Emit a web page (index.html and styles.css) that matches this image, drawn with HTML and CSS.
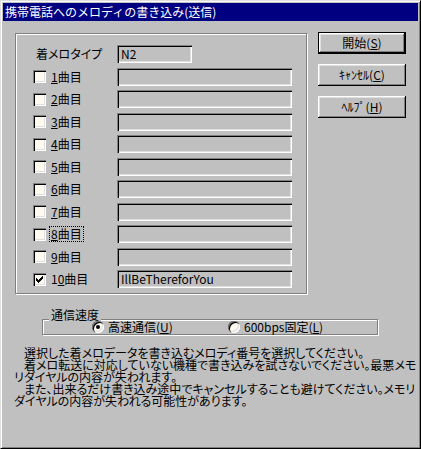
FILE: index.html
```html
<!DOCTYPE html>
<html lang="ja">
<head>
<meta charset="utf-8">
<title>携帯電話へのメロディの書き込み(送信)</title>
<link rel="stylesheet" href="styles.css">
</head>
<body>
<div class="window">
  <div class="titlebar">携帯電話へのメロディの書き込み(送信)</div>
  <div class="client">
    <div class="top">
      <div class="group">
        <span class="type-label">着メロタイプ</span>
        <span class="field short">N2</span>

        <span class="check"><span class="box"></span><span class="lbl"><u>1</u>曲目</span></span>
        <span class="field"></span>

        <span class="check"><span class="box"></span><span class="lbl"><u>2</u>曲目</span></span>
        <span class="field"></span>

        <span class="check"><span class="box"></span><span class="lbl"><u>3</u>曲目</span></span>
        <span class="field"></span>

        <span class="check"><span class="box"></span><span class="lbl"><u>4</u>曲目</span></span>
        <span class="field"></span>

        <span class="check"><span class="box"></span><span class="lbl"><u>5</u>曲目</span></span>
        <span class="field"></span>

        <span class="check"><span class="box"></span><span class="lbl"><u>6</u>曲目</span></span>
        <span class="field"></span>

        <span class="check"><span class="box"></span><span class="lbl"><u>7</u>曲目</span></span>
        <span class="field"></span>

        <span class="check"><span class="box"></span><span class="lbl focus"><u>8</u>曲目</span></span>
        <span class="field"></span>

        <span class="check"><span class="box"></span><span class="lbl"><u>9</u>曲目</span></span>
        <span class="field"></span>

        <span class="check"><span class="box"><svg class="tick" viewBox="0 0 13 13" width="13" height="13"><path d="M3 5h1v3h-1zM4 6h1v3h-1zM5 7h1v3h-1zM6 6h1v3h-1zM7 5h1v3h-1zM8 4h1v3h-1zM9 3h1v3h-1z" fill="#000"/></svg></span><span class="lbl">1<u>0</u>曲目</span></span>
        <span class="field">IllBeThereforYou</span>
      </div>
      <div class="buttons">
        <div class="btn default"><span>開始(<u>S</u>)</span></div>
        <div class="btn"><span>ｷｬﾝｾﾙ(<u>C</u>)</span></div>
        <div class="btn"><span>ﾍﾙﾌﾟ(<u>H</u>)</span></div>
      </div>
    </div>
    <div class="speed">
      <span class="legend">通信速度</span>
      <span class="radio-item first"><span class="radio on"></span><span class="rtext">高速通信(<u>U</u>)</span></span>
      <span class="radio-item"><span class="radio"></span><span class="rtext">600bps固定(<u>L</u>)</span></span>
    </div>
    <div class="note">
      <div class="line indent">選択した着メロデータを書き込むメロディ番号を選択してください。</div>
      <div class="line indent">着メロ転送に対応していない機種で書き込みを試さないでください。最悪メモ</div>
      <div class="line">リダイヤルの内容が失われます。</div>
      <div class="line indent">また、出来るだけ書き込み途中でキャンセルすることも避けてください。メモリ</div>
      <div class="line">ダイヤルの内容が失われる可能性があります。</div>
    </div>
  </div>
</div>
</body>
</html>
```
FILE: styles.css
```css
html, body {
  margin: 0;
  padding: 0;
  background: #c0c0c0;
}

body {
  font-family: "Noto Sans CJK JP", sans-serif;
  font-size: 12px;
  line-height: 12px;
  color: #000;
}

.window {
  width: 421px;
  height: 449px;
  box-sizing: border-box;
  border: 1px solid;
  border-color: #dfdfdf #000 #000 #dfdfdf;
  box-shadow: inset 1px 1px #fff, inset -1px -1px #808080;
  padding: 2px;
  background: #c0c0c0;
}

.titlebar {
  height: 18px;
  line-height: 18px;
  background: #000080;
  color: #fff;
  padding-left: 2px;
  white-space: nowrap;
}

.top {
  display: flex;
  align-items: flex-start;
}

.group {
  margin: 12px 0 0 12px;
  width: 292px;
  height: 261px;
  box-sizing: border-box;
  border: 1px solid #808080;
  box-shadow: inset 1px 1px #fff, 1px 1px #fff;
  padding: 11px 0 0 17px;
  display: grid;
  grid-template-columns: 84px 175px;
  grid-auto-rows: 18px;
  row-gap: 4.5px;
  align-items: center;
}

.type-label {
  padding-left: 3px;
  font-feature-settings: "palt";
}

.field {
  height: 18px;
  box-sizing: border-box;
  background: #c0c0c0;
  box-shadow: inset 1px 1px #808080, inset 2px 2px #000, inset -1px -1px #fff, inset -2px -2px #dfdfdf;
  padding: 3px 0 0 4px;
  line-height: 12px;
  white-space: nowrap;
  overflow: hidden;
}

.field.short {
  width: 75px;
}

.check {
  display: flex;
  align-items: center;
  gap: 5px;
}

.box {
  width: 13px;
  height: 13px;
  flex: none;
  background: #fffaf0;
  box-shadow: inset 1px 1px #808080, inset 2px 2px #000, inset -1px -1px #fff, inset -2px -2px #dfdfdf;
}

.tick {
  display: block;
  shape-rendering: crispEdges;
}

.lbl {
  line-height: 14px;
  padding: 0 1px;
  margin-left: -1px;
}

.lbl.focus {
  outline: 1px dotted #000;
}

.buttons {
  margin: 11px 0 0 11px;
  display: flex;
  flex-direction: column;
  gap: 10px;
}

.btn {
  width: 88px;
  height: 22px;
  box-sizing: border-box;
  display: flex;
  align-items: center;
  justify-content: center;
  background: #c0c0c0;
  box-shadow: inset -1px -1px #000, inset 1px 1px #fff, inset -2px -2px #808080, inset 2px 2px #dfdfdf;
  white-space: nowrap;
}

.btn.default {
  border: 1px solid #000;
}

.speed {
  position: relative;
  margin: 25px 0 0 39px;
  width: 336px;
  height: 16px;
  box-sizing: border-box;
  border: 1px solid #808080;
  box-shadow: inset 1px 1px #fff, 1px 1px #fff;
  padding-left: 49px;
  display: flex;
  align-items: center;
}

.legend {
  position: absolute;
  top: -11px;
  left: 6px;
  padding: 0 2px;
  background: #c0c0c0;
  line-height: 12px;
}

.radio-item {
  display: flex;
  align-items: center;
  gap: 4px;
  white-space: nowrap;
}

.radio-item.first {
  width: 136px;
}

.radio {
  position: relative;
  width: 12px;
  height: 12px;
  flex: none;
  border-radius: 50%;
  background: #fffaf0;
  box-shadow: inset 1px 1px #808080, inset 2px 2px #000, inset -1px -1px #fff, inset -2px -2px #dfdfdf;
}

.radio.on::after {
  content: "";
  position: absolute;
  left: 4px;
  top: 4px;
  width: 4px;
  height: 4px;
  border-radius: 50%;
  background: #000;
}

.note {
  margin: 12px 0 0 11px;
  font-feature-settings: "palt";
}

.line {
  height: 12px;
  line-height: 12px;
  white-space: nowrap;
}

.line.indent {
  padding-left: 10px;
}
```
